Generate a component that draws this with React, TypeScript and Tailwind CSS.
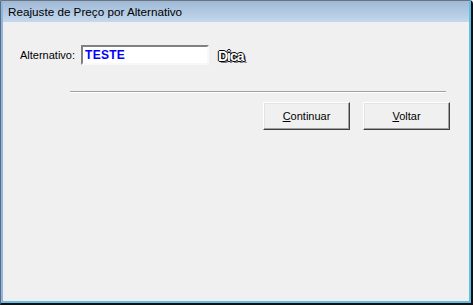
export default function App() {
  return (
    <div className="w-[473px] h-[305px] overflow-hidden bg-[#f0f0f0]">
      <div className="flex h-full w-full flex-col border-t border-l border-r-2 border-b-2 border-t-[#6b7280] border-l-[#5b6b7d] border-r-[#111] border-b-[#111] rounded-tr-[4px]">
        <div className="flex h-full flex-col border-r-2 border-b-2 border-l-2 border-r-[#59c3e6] border-b-[#66bfe3] border-l-[#8fb6dc]">
          {/* title bar */}
          <div className="flex h-[21px] shrink-0 items-center bg-gradient-to-b from-[#9fb9d6] to-[#c4d8ee] pl-[5px] font-['Liberation_Sans',sans-serif] text-[11.7px] text-black">
            Reajuste de Preço por Alternativo
          </div>

          {/* body */}
          <div className="flex flex-1 flex-col bg-[#f0f0f0] font-['Liberation_Sans',sans-serif] text-[11px] text-black">
            <div className="mt-[23px] flex items-center pl-[17px]">
              <span className="w-[61px]">Alternativo:</span>
              <div className="flex h-[20px] w-[128px] items-center border-2 border-t-[#808080] border-l-[#808080] border-r-[#f8f8f8] border-b-[#f8f8f8] bg-white pl-[2px]">
                <span className="font-['Liberation_Sans',sans-serif] text-[12px] font-bold tracking-[0.3px] text-[#0000ff]">
                  TESTE
                </span>
              </div>
              <span className="ml-[9px] mt-[2px] font-['Liberation_Sans',sans-serif] text-[14px] font-bold leading-none tracking-[-1px] text-white [text-shadow:-1px_0_0_#000,1px_0_0_#000,0_-1px_0_#000,0_1px_0_#000,2px_2px_0_#7a7a7a]">
                Dica
              </span>
            </div>

            <div className="mt-[26px] ml-[67px] mr-[23px] h-[2px] border-t border-t-[#a0a0a0] border-b border-b-white" />

            <div className="mt-[9px] flex justify-end gap-[13px] pr-[19px]">
              <button className="h-[28px] w-[87px] border border-t-white border-l-white border-r-[#404040] border-b-[#404040] bg-[#f0f0f0] text-[11px] shadow-[inset_-1px_-1px_0_#a0a0a0,inset_1px_1px_0_#e3e3e3]">
                <span className="underline">C</span>ontinuar
              </button>
              <button className="h-[28px] w-[87px] border border-t-white border-l-white border-r-[#404040] border-b-[#404040] bg-[#f0f0f0] text-[11px] shadow-[inset_-1px_-1px_0_#a0a0a0,inset_1px_1px_0_#e3e3e3]">
                <span className="underline">V</span>oltar
              </button>
            </div>
          </div>
        </div>
      </div>
    </div>
  );
}
